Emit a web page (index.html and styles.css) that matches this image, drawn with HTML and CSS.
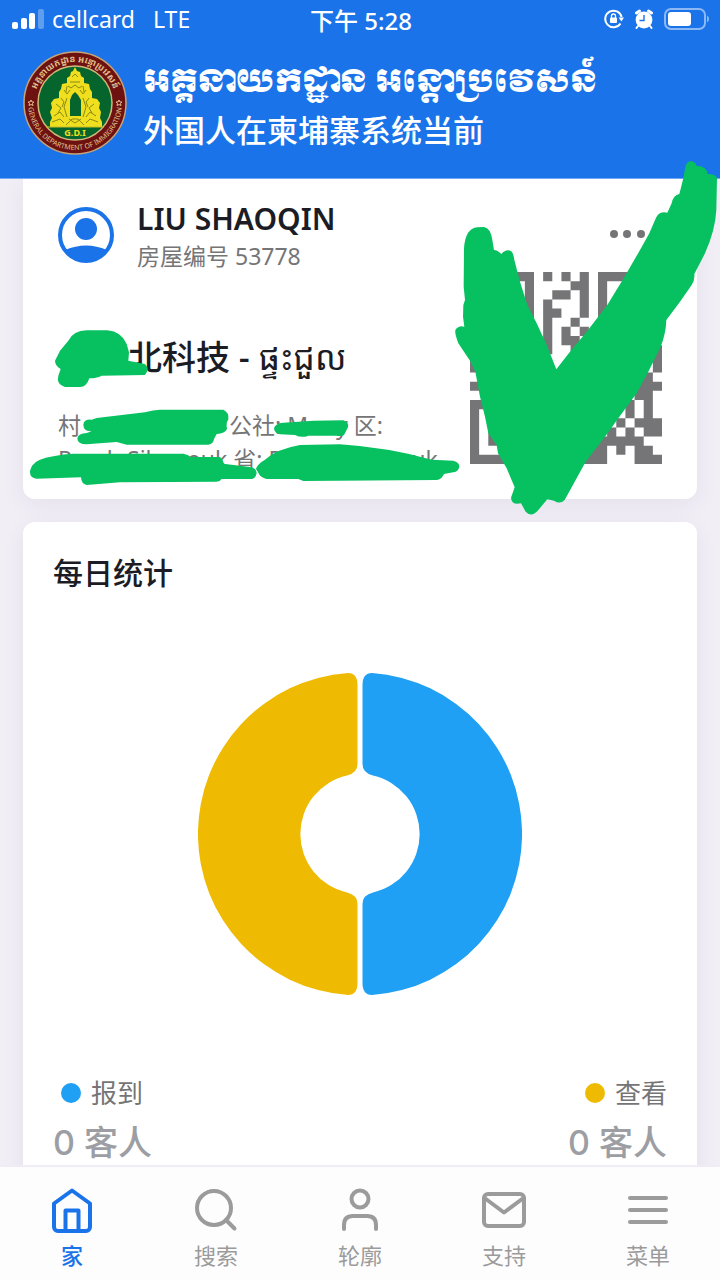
FILE: index.html
```html
<!DOCTYPE html>
<html lang="zh-CN">
<head>
    <meta charset="UTF-8">
    <meta name="viewport" content="width=device-width, initial-scale=1.0">
    <title>外国人在柬埔寨系统当前</title>
    <link rel="stylesheet" href="styles.css">
</head>
<body>
    <header class="header">
        <div class="status-bar">
            <div class="status-left">
                <svg class="signal" viewBox="0 0 32 20" width="32" height="20" fill="#fff">
                    <rect x="0" y="13" width="6" height="7" rx="2"/>
                    <rect x="9" y="9" width="6" height="11" rx="2"/>
                    <rect x="17" y="4" width="6" height="16" rx="2"/>
                    <rect x="26" y="0" width="6" height="20" rx="2" opacity="0.3"/>
                </svg>
                <span>cellcard</span>
                <span class="network">LTE</span>
            </div>
            <div class="clock">下午 5:28</div>
            <div class="status-right">
                <svg viewBox="0 0 20 20" width="20" height="20" fill="none" stroke="#fff" stroke-width="2">
                    <path d="M16.5 14.5A8.3 8.3 0 1 1 17.6 8"/>
                    <path d="M14.6 8.5h5.4l-2.6 4z" fill="#fff" stroke="none"/>
                    <rect x="6" y="8.5" width="7" height="5.5" rx="1" fill="#fff" stroke="none"/>
                    <path d="M7.5 9V7a2 2 0 0 1 4 0v2" stroke-width="1.3"/>
                </svg>
                <svg viewBox="0 0 20 20" width="20" height="20">
                    <circle cx="10" cy="11" r="8.4" fill="#fff"/>
                    <path d="M2.500 4l3-2M17.500 4l-3-2" stroke="#fff" stroke-width="3" stroke-linecap="round"/>
                    <path d="M4 17l-1.500 2M16 17l1.500 2" stroke="#fff" stroke-width="2" stroke-linecap="round"/>
                    <path d="M10 6v5.5H5.5" fill="none" stroke="#1a73e9" stroke-width="1.4"/>
                </svg>
                <svg viewBox="0 0 46 22" width="46" height="22">
                    <rect x="1" y="1" width="40" height="20" rx="6" fill="none" stroke="#8cb8f5" stroke-width="2"/>
                    <rect x="4" y="4" width="23" height="14" rx="3" fill="#fff"/>
                    <path d="M43 7.500a4 4 0 0 1 0 7z" fill="#8cb8f5"/>
                </svg>
            </div>
        </div>
        <div class="brand">
            <svg class="seal" viewBox="0 0 106 106" width="106" height="106">
                <defs>
                    <path id="arc-top" d="M12 53a41 41 0 0 1 82 0"/>
                    <path id="arc-bottom" d="M6 53a47 47 0 0 0 94 0"/>
                </defs>
                <circle cx="53" cy="53" r="51" fill="#6d1211" stroke="#c9a273" stroke-width="1.5"/>
                <circle cx="53" cy="53" r="37" fill="#06652c" stroke="#d2b77b" stroke-width="1.5"/>
                <text class="seal-text seal-khmer"><textPath href="#arc-top" startOffset="50%" text-anchor="middle">អគ្គនាយកដ្ឋាន អន្តោប្រវេសន៍</textPath></text>
                <text class="seal-text"><textPath href="#arc-bottom" startOffset="50%" text-anchor="middle">GENERAL DEPARTMENT OF IMMIGRATION</textPath></text>
                <path d="M9 50l1 2 2 0-1.500 1.500.5 2-2-1-2 1 .5-2L6 52l2 0zM97 50l1 2 2 0-1.500 1.500.5 2-2-1-2 1 .5-2L94 52l2 0z" fill="none" stroke="#e3c18c"/>
                <path d="M53 17l2 4 3 1 1 4 3 2 0 5 5 1 1 5 2 3 0 6 5 1 3 4-1 5 2 4-1 6 2 4v5H28v-5l2-4-2-6 2-4-1-5 3-4 5-1 0-6 2-3 1-5 5-1 0-5 3-2 1-4 2-1z" fill="#efdf1f"/>
                <path d="M48 66V50l2-5 3-3 3 3 3 5v16z" fill="#06652c"/>
                <path d="M50 27l3-3 3 3M48 32h10M46 36l3 2 4-3 4 3 3-2M42 40l3 4 3-4M58 40l3 4 3-4M39 48l3 4-2 5M67 48l-3 4 2 5M34 54l5 4-3 5M72 54l-5 4 3 5M32 66l6-4 4 5M74 66l-6-4-4 5M45 48l-3 9 3 10M61 48l3 9-3 10M30 72l8-3 4 4M76 72l-8-3-4 4M44 75l6-6h6l6 6M47 69l6 4 6-4M45 36l-1 6M61 36l1 6" fill="none" stroke="#8b8a12"/>
                <path d="M24 77h58" stroke="#c9bd28" stroke-width="1.200"/>
                <text class="seal-gdi" x="53" y="86" text-anchor="middle">G.D.I</text>
            </svg>
            <div class="brand-text">
                <div class="brand-khmer" lang="km">អគ្គនាយកដ្ឋាន អន្តោប្រវេសន៍</div>
                <h1>外国人在柬埔寨系统当前</h1>
            </div>
        </div>
    </header>

    <main class="content">
        <section class="card house">
            <div class="house-info">
                <div class="owner">
                    <svg viewBox="0 0 56 56" width="56" height="56">
                        <circle cx="28" cy="28" r="26" fill="#fff" stroke="#1a73e9" stroke-width="4"/>
                        <circle cx="28" cy="22" r="11" fill="#1a73e9"/>
                        <path d="M7 43Q28 34 49 43A26 26 0 0 1 7 43z" fill="#1a73e9"/>
                    </svg>
                    <div>
                        <h2 class="owner-name">LIU SHAOQIN</h2>
                        <div class="owner-no">房屋编号 53778</div>
                    </div>
                </div>
                <h3 class="house-name">北科技 - <span lang="km">ផ្ទះជួល</span></h3>
                <p class="address">村<span class="gap-village"></span>公社: M<span class="gap-commune"></span>y 区:<br>Preah Sihanouk 省: Preah Sihanouk</p>
            </div>
            <div class="house-side">
                <button class="more" aria-label="更多">
                    <svg viewBox="0 0 36 8" width="36" height="8" fill="#757577"><circle cx="4" cy="4" r="4"/><circle cx="17" cy="4" r="4"/><circle cx="31" cy="4" r="4"/></svg>
                </button>
                <svg class="qr" viewBox="0 0 21 21" width="192" height="192" fill="#757577">
                    <path fill-rule="evenodd" d="M0 0h7v7H0zM1 1v5h5V1zM2 2h3v3H2zM14 0h7v7h-7zM15 1v5h5V1zM16 2h3v3h-3zM0 14h7v7H0zM1 15v5h5v-5zM2 16h3v3H2z"/>
                    <path d="M8 0h1v1H8zM10 0h1v1h-1zM12 0h1v5h-1zM11 1h1v1h-1zM9 2h2v1H9zM8 3h1v6H8zM9 4h1v1H9zM11 5h1v1h-1zM10 6h1v2h-1zM12 6h1v1h-1zM11 7h1v2h-1zM20 8h1v3h-1zM0 9h1v2H0zM0 12h1v1H0zM19 11h1v1h-1zM18 11h1v3h-1zM19 12h2v1h-2zM19 13h1v3h-1zM17 14h1v2h-1zM18 16h3v1h-3zM16 16h1v1h-1zM15 17h1v1h-1zM17 17h1v1h-1zM19 17h2v1h-2zM14 18h5v1h-5zM12 19h3v2h-3zM16 19h1v1h-1zM18 19h2v1h-2zM18 20h3v1h-3z"/>
                </svg>
            </div>
            <!-- marker strokes over the private parts -->
            <svg class="marker" viewBox="9 0 1341 960" width="447" height="320" fill="#07c160">
                <path d="M105 545L120 515L145 485Q160 455 200 454L262 454Q305 458 320 495L327 520L325 545L375 555Q390 570 375 588L245 590Q235 597 208 598Q200 624 180 624L135 624Q108 615 115 590L122 570Q105 560 105 545Z"/>
                <path d="M190 737Q192 720 215 722L230 717L375 700Q400 693 420 692L610 692Q628 700 625 722Q617 730 621 750Q615 763 590 765L582 780Q580 795 565 797L320 797L290 789L200 796Q172 796 172 778Q175 763 200 762L215 757Q190 757 190 737Z"/>
                <path d="M762 748Q765 733 790 731L880 725L970 724Q988 730 984 745L972 768Q965 772 950 770L865 770Q845 778 825 768L780 766Q762 762 762 748Z"/>
                <path d="M30 875L36 860Q50 840 100 832Q130 824 160 824L490 824Q505 826 512 834L600 834Q610 840 610 854L690 864Q710 868 710 882Q708 900 690 900L605 900Q600 908 590 908L300 910L200 918Q184 915 183 895L50 899Q30 898 30 880Z"/>
                <path d="M708 870Q712 855 735 842Q770 810 840 798L960 796Q1100 805 1235 842L1300 845Q1318 850 1318 863Q1315 878 1300 880L1272 885Q1265 902 1250 903L850 906L835 900L740 900Q720 895 714 880Z"/>
            </svg>
        </section>

        <section class="card stats">
            <h2 class="stats-title">每日统计</h2>
            <svg class="donut" viewBox="-162 -162 324 324" width="324" height="324">
                <path d="M2.500 -149Q2.500 -161 12 -161A161.400 161.400 0 0 1 12 161Q2.500 161 2.500 149V70Q2.500 61 13 58.500A60 60 0 0 0 13 -58.500Q2.500 -61 2.500 -70Z" fill="#1fa0f5"/>
                <path d="M-2.500 -149Q-2.500 -161 -12 -161A161.400 161.400 0 0 0 -12 161Q-2.500 161 -2.500 149V70Q-2.500 61 -13 58.500A60 60 0 0 1 -13 -58.500Q-2.500 -61 -2.500 -70Z" fill="#eebb02"/>
            </svg>
            <div class="legend">
                <div class="legend-item">
                    <div class="legend-label"><i class="dot dot-blue"></i>报到</div>
                    <div class="legend-value">0 客人</div>
                </div>
                <div class="legend-item">
                    <div class="legend-label"><i class="dot dot-yellow"></i>查看</div>
                    <div class="legend-value">0 客人</div>
                </div>
            </div>
        </section>
    </main>

    <nav class="tabs">
        <a class="tab active" href="#home">
            <svg viewBox="0 0 48 48"><path d="M24 4.500L42 17.500V41a4 4 0 0 1-4 4H10a4 4 0 0 1-4-4V17.500zM17.500 45V24.500h13V45"/></svg>
            家
        </a>
        <a class="tab" href="#search">
            <svg viewBox="0 0 48 48"><circle cx="22" cy="22" r="17"/><path d="M34 34l8.500 8.500"/></svg>
            搜索
        </a>
        <a class="tab" href="#profile">
            <svg viewBox="0 0 48 48"><circle cx="24" cy="13" r="8.500"/><path d="M8 43v-4q0-9 9-9h14q9 0 9 9v4"/></svg>
            轮廓
        </a>
        <a class="tab" href="#support">
            <svg viewBox="0 0 48 48"><rect x="4" y="8" width="40" height="32" rx="4"/><path d="M4.500 12L24 26.500L43.500 12"/></svg>
            支持
        </a>
        <a class="tab" href="#menu">
            <svg viewBox="0 0 48 48"><path d="M6 12h36M6 24h36M6 36h36"/></svg>
            菜单
        </a>
    </nav>

    <svg class="check" viewBox="0 0 840 1140" width="280" height="380" fill="#07c160">
        <path d="M72 295Q76 235 112 232L132 231Q152 234 157 270L162 300Q172 300 184 312Q198 296 213 303Q220 308 223 330L240 395L262 465L290 520L318 580L349 658L390 605L440 545L502 465L555 378L600 300L628 250L648 203Q658 183 682 188L695 160Q700 135 718 132L730 85L736 50Q742 32 755 34Q768 38 770 48Q798 46 803 72Q828 72 831 85L829 180Q826 240 795 310L763 372Q765 390 755 405L720 455L679 510Q678 550 662 590L625 665L590 730L560 770L495 860L437 935L374 1050Q360 1064 342 1052L322 1048L295 1080Q275 1104 257 1085L243 1060Q214 1066 213 1043L224 1012L200 955L174 910L170 885L145 850L135 800L120 740L106 665L92 635L55 580Q44 552 46 540Q56 525 73 530L69 500L70 465L75 450L71 410Z"/>
    </svg>
</body>
</html>
```
FILE: styles.css
```css
:root {
    --blue: #1a73e9;
    --background-color: #f1eef6;
    --text-color: #1c1c24;
    --grey: #757577;
    --light-grey: #9c9ea3;
}

* {
    box-sizing: border-box;
}

body {
    position: relative;
    display: flex;
    flex-direction: column;
    height: 100vh;
    margin: 0;
    overflow: hidden;
    background-color: var(--background-color);
    color: var(--text-color);
    font-family: "Noto Sans", "Noto Sans CJK SC", "Noto Sans Khmer", sans-serif;
}

h1, h2, h3, p {
    margin: 0;
}

svg {
    display: block;
    flex: none;
}

/* header */
.header {
    padding-bottom: 22px;
    background-color: var(--blue);
    border-bottom: 1px solid #6fa8f5;
    color: #fff;
}

.status-bar {
    display: grid;
    grid-template-columns: 1fr auto 1fr;
    align-items: center;
    height: 38px;
    padding: 0 10px 0 12px;
    font-size: 23px;
}

.status-left, .status-right {
    display: flex;
    align-items: center;
    gap: 8px;
}

.status-right {
    justify-content: flex-end;
    gap: 10px;
}

.network {
    margin-left: 10px;
}

.clock {
    font-size: 24px;
    font-weight: 500;
}

.brand {
    display: flex;
    align-items: center;
    gap: 15px;
    padding: 12px 22px 0;
}

.brand-text {
    padding-top: 4px;
}

.brand-khmer {
    font-family: "Khmer OS Muol Light", Moul, "Noto Sans Khmer", "Noto Serif Khmer", serif;
    font-size: 31px;
    font-weight: 400;
    line-height: 50px;
    white-space: nowrap;
}

.brand h1 {
    font-size: 31px;
    font-weight: 500;
    line-height: 46px;
}

.seal-text {
    fill: #e3c18c;
    font-size: 7px;
}

.seal-khmer {
    font-size: 9px;
    font-weight: 700;
}

.seal-gdi {
    fill: #efdf1f;
    font-size: 9px;
    font-weight: 700;
}

/* content */
.content {
    flex: 1;
    min-height: 0;
    padding: 0 23px;
    overflow-y: auto;
    scrollbar-width: none;
}

.card {
    position: relative;
    margin-bottom: 23px;
    border-radius: 12px;
    background-color: #fff;
    box-shadow: 0 6px 24px rgba(60, 40, 110, 0.06);
}

.house {
    display: flex;
    justify-content: space-between;
    height: 320px;
    padding: 19px 35px 0;
    border-radius: 0 0 12px 12px;
}

.owner {
    display: flex;
    align-items: center;
    gap: 23px;
}

.owner-name {
    font-size: 30px;
    font-weight: 600;
    line-height: 42px;
}

.owner-no {
    color: var(--grey);
    font-size: 23px;
    line-height: 32px;
}

.house-name {
    margin: 60px 0 0 70px;
    font-size: 34px;
    font-weight: 500;
    line-height: 50px;
}

.house-name span {
    font-weight: 400;
}

.address {
    margin-top: 26px;
    color: var(--grey);
    font-size: 23px;
    line-height: 34px;
    white-space: nowrap;
}

.gap-village {
    display: inline-block;
    width: 148px;
}

.gap-commune {
    display: inline-block;
    width: 28px;
}

.house-side {
    display: flex;
    flex-direction: column;
    align-items: flex-end;
    gap: 34px;
    padding-top: 32px;
}

.more {
    padding: 0 16px 0 0;
    border: 0;
    background: none;
    cursor: pointer;
}

.marker {
    position: absolute;
    top: 0;
    left: 0;
}

.check {
    position: absolute;
    top: 150px;
    right: 0;
    pointer-events: none;
}

/* stats */
.stats {
    padding: 28px 30px 30px;
}

.stats-title {
    font-size: 30px;
    font-weight: 500;
    line-height: 46px;
}

.donut {
    margin: 76px auto 74px;
}

.legend {
    display: flex;
    justify-content: space-between;
}

.legend-label {
    display: flex;
    align-items: center;
    gap: 10px;
    padding-left: 8px;
    color: var(--grey);
    font-size: 26px;
    line-height: 46px;
}

.legend-item:last-child .legend-label {
    justify-content: flex-end;
}

.legend-value {
    color: var(--light-grey);
    font-family: Inter, "Noto Sans CJK SC", sans-serif;
    font-size: 34px;
    font-weight: 500;
    line-height: 54px;
}

.dot {
    width: 20px;
    height: 20px;
    border-radius: 50%;
}

.dot-blue {
    background-color: #1fa0f5;
}

.dot-yellow {
    background-color: #eebb02;
}

/* bottom tabs */
.tabs {
    position: relative;
    display: grid;
    grid-template-columns: repeat(5, 1fr);
    height: 115px;
    padding-top: 19px;
    border-top: 2px solid #efecf5;
    background-color: #fdfdfe;
}

.tab {
    display: flex;
    flex-direction: column;
    align-items: center;
    gap: 5px;
    color: #9b9b9b;
    font-size: 22px;
    line-height: 32px;
    text-decoration: none;
}

.tab svg {
    width: 48px;
    height: 48px;
    fill: none;
    stroke: currentColor;
    stroke-width: 4;
    stroke-linecap: round;
    stroke-linejoin: round;
}

.tab.active {
    color: var(--blue);
    font-weight: 500;
}
```
